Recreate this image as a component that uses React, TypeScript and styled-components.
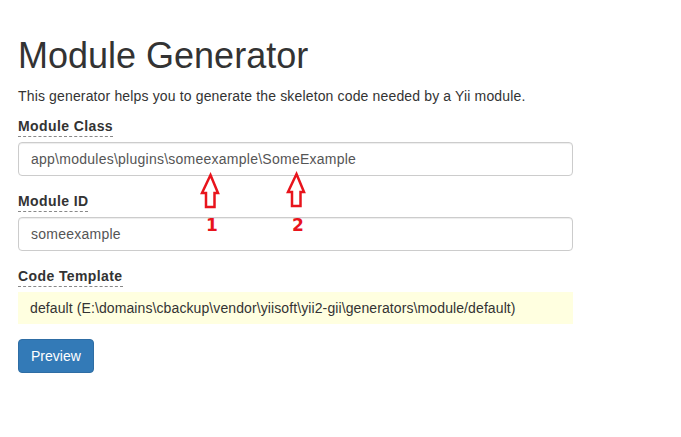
import React from "react";
import styled, { createGlobalStyle } from "styled-components";

const GlobalStyle = createGlobalStyle`
  html, body {
    margin: 0;
    padding: 0;
    background: #fff;
  }
  body {
    font-family: "Liberation Sans", Arial, sans-serif;
    font-size: 14px;
    line-height: 1.42857143;
    color: #333;
  }
  * {
    box-sizing: border-box;
  }
`;

const Page = styled.div`
  position: relative;
  width: 681px;
  height: 437px;
  padding: 36px 0 0 18px;
`;

const Generator = styled.div`
  width: 555px;
`;

const Title = styled.h1`
  margin: 0 0 10px;
  font-size: 36px;
  font-weight: 500;
  line-height: 1.1;
  color: #333;
`;

const Lead = styled.p`
  margin: 0 0 10px;
  letter-spacing: 0.15px;
`;

const FormGroup = styled.div`
  margin-bottom: 15px;
`;

const Label = styled.label`
  display: inline-block;
  margin-bottom: 5px;
  font-weight: bold;
  letter-spacing: 0.4px;
  border-bottom: 1px dashed #888;
  cursor: help;
`;

const Input = styled.input`
  display: block;
  width: 100%;
  height: 34px;
  padding: 6px 12px;
  font-family: inherit;
  font-size: 14px;
  line-height: 1.42857143;
  letter-spacing: 0.25px;
  color: #555;
  background: #fff;
  border: 1px solid #ccc;
  border-radius: 4px;
  box-shadow: inset 0 1px 1px rgba(0, 0, 0, 0.075);
  outline: none;
`;

const StickyValue = styled.div`
  padding: 6px 12px;
  background: lightyellow;
  white-space: pre;
  letter-spacing: 0.1px;
`;

const PrimaryButton = styled.button`
  display: inline-block;
  height: 34px;
  padding: 6px 12px;
  font-family: inherit;
  font-size: 14px;
  line-height: 1.42857143;
  color: #fff;
  background: #337ab7;
  border: 1px solid #2e6da4;
  border-radius: 4px;
  cursor: pointer;
`;

const Arrow = styled.svg<{ $x: number; $y: number }>`
  position: absolute;
  left: ${(p) => p.$x}px;
  top: ${(p) => p.$y}px;
  width: 20px;
  height: 36px;
  overflow: visible;
`;

const Marker = styled.span<{ $x: number; $y: number }>`
  position: absolute;
  left: ${(p) => p.$x}px;
  top: ${(p) => p.$y}px;
  font-family: "DejaVu Sans", sans-serif;
  font-weight: bold;
  font-size: 17px;
  line-height: 17px;
  color: #e8141c;
`;

const UpArrow = ({ x, y }: { x: number; y: number }) => (
  <Arrow $x={x} $y={y} viewBox="0 0 20 36">
    <polygon
      points="10.5,2 18,20 14.5,20 14.5,34 6,34 6,20 2,20"
      fill="none"
      stroke="#e8141c"
      strokeWidth="2.5"
      strokeLinejoin="miter"
    />
  </Arrow>
);

const App = () => {
  return (
    <Page>
      <GlobalStyle />
      <Generator>
        <Title>Module Generator</Title>
        <Lead>
          This generator helps you to generate the skeleton code needed by a
          Yii module.
        </Lead>

        <FormGroup>
          <Label htmlFor="module-class">Module Class</Label>
          <Input
            id="module-class"
            type="text"
            defaultValue="app\modules\plugins\someexample\SomeExample"
          />
        </FormGroup>

        <FormGroup>
          <Label htmlFor="module-id">Module ID</Label>
          <Input id="module-id" type="text" defaultValue="someexample" />
        </FormGroup>

        <FormGroup>
          <Label>Code Template</Label>
          <StickyValue>
            default (E:\domains\cbackup\vendor\yiisoft\yii2-gii\generators\module/default)
          </StickyValue>
        </FormGroup>

        <PrimaryButton type="button">Preview</PrimaryButton>
      </Generator>

      <UpArrow x={200} y={173} />
      <UpArrow x={286} y={172} />
      <Marker $x={206} $y={217}>1</Marker>
      <Marker $x={292} $y={217}>2</Marker>
    </Page>
  );
};

export default App;
